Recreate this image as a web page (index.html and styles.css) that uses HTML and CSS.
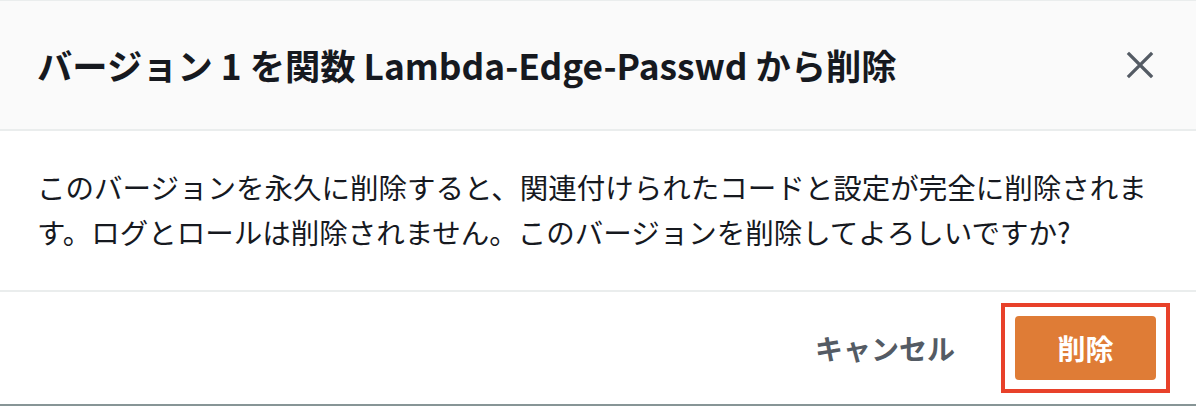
FILE: index.html
```html
<!DOCTYPE html>
<html lang="ja">
<head>
<meta charset="utf-8">
<link rel="stylesheet" href="styles.css">
</head>
<body>
<div class="modal">
  <div class="header">
    <h2 class="title">バージョン 1 を関数 Lambda-Edge-Passwd から削除</h2>
    <button class="close" aria-label="閉じる">
      <svg width="28" height="28" viewBox="0 0 28 28"><path d="M3 3 L25 25 M25 3 L3 25" stroke="#545b64" stroke-width="3.2" stroke-linecap="square" fill="none"/></svg>
    </button>
  </div>
  <div class="content">
    <p class="text">このバージョンを永久に削除すると、関連付けられたコードと設定が完全に削除されます。ログとロールは削除されません。このバージョンを削除してよろしいですか?</p>
  </div>
  <div class="footer">
    <button class="cancel">キャンセル</button>
    <div class="highlight">
      <button class="primary">削除</button>
    </div>
  </div>
</div>
</body>
</html>
```
FILE: styles.css
```css
html, body {
  margin: 0;
  padding: 0;
  background: #ffffff;
}
body {
  font-family: "Noto Sans CJK JP", "Noto Sans", sans-serif;
  color: #16191f;
}
.modal {
  width: 1196px;
  height: 406px;
  box-sizing: border-box;
  border-top: 1px solid #eaeded;
  border-bottom: 2px solid #879596;
  display: flex;
  flex-direction: column;
}
.header {
  height: 130px;
  box-sizing: border-box;
  background: #fafafa;
  border-bottom: 2px solid #eaeded;
  display: flex;
  align-items: center;
  justify-content: space-between;
  padding: 0 42px 0 37px;
  flex: none;
}
.title {
  margin: 0;
  font-size: 35.3px;
  font-weight: 700;
  line-height: 40px;
  color: #16191f;
}
.close {
  border: 0;
  background: none;
  padding: 0;
  width: 28px;
  height: 28px;
  display: flex;
}
.content {
  height: 161px;
  box-sizing: border-box;
  border-bottom: 2px solid #eaeded;
  padding: 33px 40px 0 37px;
  flex: none;
}
.text {
  margin: 0;
  font-size: 28.5px;
  line-height: 45px;
  color: #16191f;
}
.footer {
  flex: 1;
  display: flex;
  align-items: center;
  justify-content: flex-end;
  padding-right: 26px;
  gap: 28px;
}
.cancel {
  border: 0;
  background: none;
  font-family: inherit;
  font-size: 28px;
  font-weight: 700;
  color: #545b64;
  padding: 0 18px;
}
.highlight {
  border: 4px solid #e8412a;
  padding: 9px 10px;
  display: flex;
}
.primary {
  width: 141px;
  height: 64px;
  border: 0;
  border-radius: 4px;
  background: #df7c36;
  color: #ffffff;
  font-family: inherit;
  font-size: 28px;
  font-weight: 700;
}
```
